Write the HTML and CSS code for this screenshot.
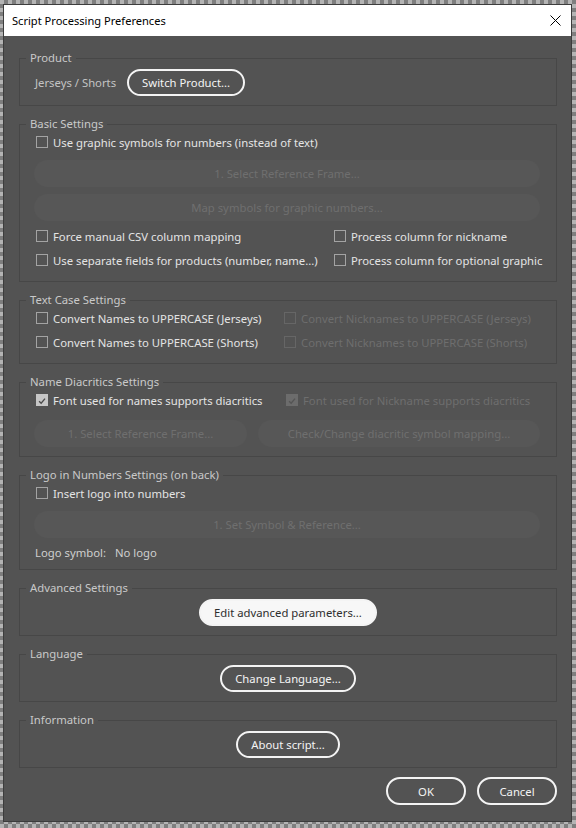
FILE: index.html
```html
<!DOCTYPE html>
<html lang="en">
<head>
<meta charset="utf-8">
<title>Script Processing Preferences</title>
<link rel="stylesheet" href="styles.css">
</head>
<body>
<div class="dialog">
  <div class="titlebar">
    <span class="title">Script Processing Preferences</span>
    <span class="close"><svg width="11" height="11" viewBox="0 0 11 11"><path d="M0.5 0.5 L10.5 10.5 M10.5 0.5 L0.5 10.5" stroke="#000" stroke-width="1" fill="none"/></svg></span>
  </div>
  <div class="body">
    <fieldset class="panel">
      <legend>Product</legend>
      <div class="content c-product">
        <div class="hrow">
          <span class="static product-name">Jerseys / Shorts</span>
          <button class="btn">Switch Product...</button>
        </div>
      </div>
    </fieldset>

    <fieldset class="panel">
      <legend>Basic Settings</legend>
      <div class="content c-basic">
        <div class="check"><span class="box"></span><span class="label">Use graphic symbols for numbers (instead of text)</span></div>
        <button class="dbtn b1">1. Select Reference Frame...</button>
        <button class="dbtn b2">Map symbols for graphic numbers...</button>
        <div class="pair pair-basic r3">
          <div class="check"><span class="box"></span><span class="label">Force manual CSV column mapping</span></div>
          <div class="check"><span class="box"></span><span class="label">Process column for nickname</span></div>
        </div>
        <div class="pair pair-basic r4">
          <div class="check"><span class="box"></span><span class="label">Use separate fields for products (number, name...)</span></div>
          <div class="check"><span class="box"></span><span class="label">Process column for optional graphic</span></div>
        </div>
      </div>
    </fieldset>

    <fieldset class="panel">
      <legend>Text Case Settings</legend>
      <div class="content c-text">
        <div class="pair pair-text">
          <div class="check"><span class="box"></span><span class="label">Convert Names to UPPERCASE (Jerseys)</span></div>
          <div class="check disabled"><span class="box"></span><span class="label">Convert Nicknames to UPPERCASE (Jerseys)</span></div>
        </div>
        <div class="pair pair-text r2">
          <div class="check"><span class="box"></span><span class="label">Convert Names to UPPERCASE (Shorts)</span></div>
          <div class="check disabled"><span class="box"></span><span class="label">Convert Nicknames to UPPERCASE (Shorts)</span></div>
        </div>
      </div>
    </fieldset>

    <fieldset class="panel">
      <legend>Name Diacritics Settings</legend>
      <div class="content c-diac">
        <div class="pair pair-diac">
          <div class="check checked"><span class="box"><svg width="12" height="12" viewBox="0 0 12 12"><path d="M2.5 6.2 L5 8.7 L9.6 3.2" stroke="#4a4a4a" stroke-width="1.6" fill="none"/></svg></span><span class="label">Font used for names supports diacritics</span></div>
          <div class="check checked disabled"><span class="box"><svg width="12" height="12" viewBox="0 0 12 12"><path d="M2.5 6.2 L5 8.7 L9.6 3.2" stroke="#555555" stroke-width="1.6" fill="none"/></svg></span><span class="label">Font used for Nickname supports diacritics</span></div>
        </div>
        <div class="btnpair">
          <button class="dbtn bl">1. Select Reference Frame...</button>
          <button class="dbtn br">Check/Change diacritic symbol mapping...</button>
        </div>
      </div>
    </fieldset>

    <fieldset class="panel">
      <legend>Logo in Numbers Settings (on back)</legend>
      <div class="content c-logo">
        <div class="check"><span class="box"></span><span class="label">Insert logo into numbers</span></div>
        <button class="dbtn lb">1. Set Symbol &amp; Reference...</button>
        <div class="logo-row"><span class="static">Logo symbol:</span><span class="static logo-val">No logo</span></div>
      </div>
    </fieldset>

    <fieldset class="panel">
      <legend>Advanced Settings</legend>
      <div class="content c-center">
        <button class="btn btn-default">Edit advanced parameters...</button>
      </div>
    </fieldset>

    <fieldset class="panel">
      <legend>Language</legend>
      <div class="content c-center">
        <button class="btn">Change Language...</button>
      </div>
    </fieldset>

    <fieldset class="panel">
      <legend>Information</legend>
      <div class="content c-center">
        <button class="btn">About script...</button>
      </div>
    </fieldset>

    <div class="footer">
      <button class="btn btn-fixed">OK</button>
      <button class="btn btn-fixed">Cancel</button>
    </div>
  </div>
</div>
</body>
</html>
```
FILE: styles.css
```css
html, body {
  margin: 0;
  padding: 0;
}
body {
  width: 576px;
  height: 828px;
  overflow: hidden;
  background-color: #b4b4b4;
  background-image: repeating-conic-gradient(#7e7e7e 0 25%, #b4b4b4 0 50%);
  background-size: 8px 8px;
  font-family: "Noto Sans", "Open Sans", sans-serif;
  font-size: 11.3px;
}
.dialog {
  margin: 5px 0 0 4px;
  width: 567px;
  background: #535353;
  box-shadow: 0 0 0 1px #3c3c3c;
}
.titlebar {
  height: 31px;
  background: #ffffff;
  display: flex;
  align-items: center;
  justify-content: space-between;
  padding: 0 10px 0 8px;
}
.title {
  color: #000;
  font-size: 11.1px;
}
.close {
  display: flex;
  width: 11px;
  height: 11px;
}
.body {
  padding: 14px 14px 16px 15px;
  display: flex;
  flex-direction: column;
  gap: 10px;
}
.panel {
  margin: 0;
  padding: 0 16px;
  border: 1px solid #474747;
  min-width: 0;
}
.panel legend {
  padding: 0 4px;
  margin-left: -10px;
  height: 16px;
  line-height: 16px;
  color: #c9c9c9;
}
.content {
  display: flex;
  flex-direction: column;
  align-items: stretch;
}
.c-product { padding: 3px 0 9px; }
.c-basic { padding: 0 0 11px; }
.c-text { padding: 0 0 11px; }
.c-diac { padding: 0 0 9px; }
.c-logo { padding: 0 0 6px; }
.c-center { padding: 3px 0 9px; align-items: center; }

.hrow {
  display: flex;
  align-items: center;
  gap: 11px;
}
.static {
  color: #cfcfcf;
  line-height: 20px;
}
.product-name {
  margin-left: -1px;
  color: #c3c3c3;
}

.check {
  display: flex;
  align-items: center;
  height: 20px;
  gap: 5px;
  white-space: nowrap;
}
.check .box {
  width: 12px;
  height: 12px;
  box-sizing: border-box;
  border: 1px solid #a3a3a3;
  display: flex;
}
.check .label {
  color: #e4e4e4;
}
.check.checked .box {
  background: #c6c6c6;
  border-color: #c6c6c6;
}
.check.disabled .box {
  border-color: #666666;
}
.check.disabled .label {
  color: #6e6e6e;
}
.check.checked.disabled .box {
  background: #6c6c6c;
  border-color: #6c6c6c;
}

.pair {
  display: grid;
}
.pair-basic { grid-template-columns: 298px 1fr; }
.pair-text { grid-template-columns: 248px 1fr; }
.pair-diac { grid-template-columns: 250px 1fr; }
.r3 { margin-top: 5px; }
.r4 { margin-top: 4px; }
.r2 { margin-top: 4px; }

button {
  font-family: inherit;
  font-size: inherit;
  margin: 0;
  cursor: default;
}
.btn {
  height: 27px;
  box-sizing: border-box;
  border: 2px solid #f4f4f4;
  border-radius: 14px;
  background: transparent;
  color: #f4f4f4;
  padding: 0 13px;
  line-height: 23px;
  white-space: nowrap;
}
.btn-default {
  background: #f7f7f7;
  color: #2e2e2e;
}
.btn-fixed {
  width: 80px;
  height: 28px;
}
.dbtn {
  height: 27px;
  border: none;
  border-radius: 14px;
  background: #575757;
  color: #6f6f6f;
  padding: 0;
  margin-left: -2px;
  line-height: 27px;
  white-space: nowrap;
}
.b1 { margin-top: 8px; }
.b2 { margin-top: 7px; }
.btnpair {
  display: grid;
  grid-template-columns: 213px 282px;
  column-gap: 11px;
  margin-top: 10px;
  margin-left: -2px;
}
.btnpair .dbtn { margin-left: 0; }
.lb { margin-top: 8px; }
.logo-row {
  margin-top: 5px;
  display: flex;
  gap: 9px;
  margin-left: -1px;
}
.footer {
  display: flex;
  justify-content: flex-end;
  gap: 11px;
  margin-top: -1px;
}
```
